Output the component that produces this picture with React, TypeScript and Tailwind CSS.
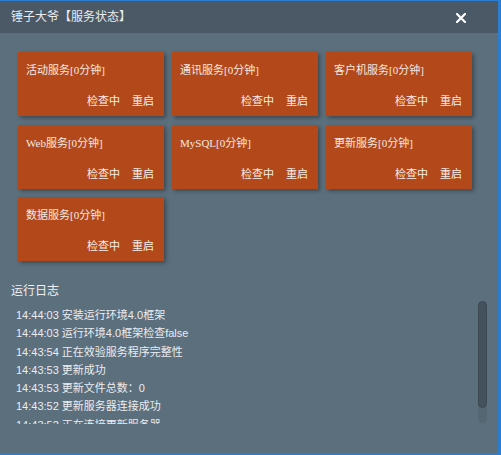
import React from "react";

const services = [
  "活动服务[0分钟]",
  "通讯服务[0分钟]",
  "客户机服务[0分钟]",
  "Web服务[0分钟]",
  "MySQL[0分钟]",
  "更新服务[0分钟]",
  "数据服务[0分钟]",
];

const logs = [
  "14:44:03 安装运行环境4.0框架",
  "14:44:03 运行环境4.0框架检查false",
  "14:43:54 正在效验服务程序完整性",
  "14:43:53 更新成功",
  "14:43:53 更新文件总数：0",
  "14:43:52 更新服务器连接成功",
  "14:43:52 正在连接更新服务器",
];

const sans = '"Liberation Sans", "Noto Sans CJK SC", sans-serif';

export default function App() {
  return (
    <div
      className="w-[501px] h-[455px] flex flex-col bg-[#5c6f7d] border-t border-r-[3px] border-b-2 border-[#2a7dd0] overflow-hidden"
      style={{ fontFamily: sans }}
    >
      <div className="h-[32px] shrink-0 bg-[#4b5865] flex items-center justify-between pl-[11px] pr-[32px]">
        <span className="text-[12px] text-[#e9ecee] leading-none">锤子大爷【服务状态】</span>
        <svg width="10" height="10" viewBox="0 0 10 10" className="mt-[1px]">
          <path d="M1 1L9 9M9 1L1 9" stroke="#ffffff" strokeWidth="2.2" strokeLinecap="square" />
        </svg>
      </div>

      <div className="pl-[18px] pt-[19px] grid grid-cols-[146px_146px_146px] gap-x-[8px] gap-y-[8.5px]">
        {services.map((s) => (
          <div
            key={s}
            className="h-[64px] bg-[#b3491b] shadow-[2px_2px_4px_rgba(0,0,0,0.35)] flex flex-col justify-between pl-[8px] pr-[10px] pt-[11px] pb-[7px]"
          >
            <div
              className="text-[11px] leading-[15px] text-[#f4e9e1]"
              style={{ fontFamily: '"Liberation Serif", "Noto Sans CJK SC", serif' }}
            >
              {s}
            </div>
            <div className="flex justify-end gap-[12px] text-[11px] leading-[15px] text-[#f7eee8]">
              <span>检查中</span>
              <span>重启</span>
            </div>
          </div>
        ))}
      </div>

      <div className="pl-[11px] mt-[21px] text-[12px] leading-[18px] text-[#eef1f3]">运行日志</div>

      <div className="flex mt-[5px] h-[119px]">
        <div className="flex-1 overflow-hidden pl-[16px] pt-[1px]">
          {logs.map((l, i) => (
            <div key={i} className="text-[11px] leading-[18.3px] text-[#eaedf0] whitespace-nowrap">
              {l}
            </div>
          ))}
        </div>
        <div className="w-[9px] mr-[11px] mt-[-4px] h-[122px] rounded-full bg-[#556773] flex flex-col">
          <div className="h-[107px] rounded-full bg-[#43525d] border border-[#3c4952]" />
        </div>
      </div>
    </div>
  );
}
